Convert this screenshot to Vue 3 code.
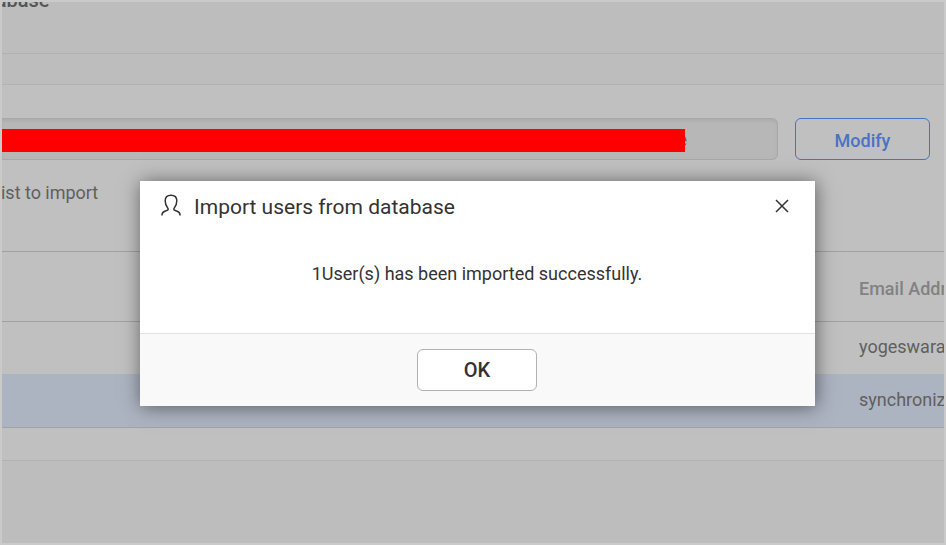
<script setup>
const rows = [
  { email: 'yogeswaran', selected: false },
  { email: 'synchronize', selected: true },
]
</script>

<template>
  <div class="screen">
    <header class="page-header"><h1>database</h1></header>
    <div class="strip"></div>
    <main class="panel">
      <div class="form-row">
        <div class="field"><span class="redacted"></span><span class="tail">e</span></div>
        <button class="modify">Modify</button>
      </div>
      <p class="hint">ist to import</p>
      <div class="table">
        <div class="row head"><span>Email Address</span></div>
        <div v-for="r in rows" :key="r.email" class="row" :class="{ selected: r.selected }">
          <span>{{ r.email }}</span>
        </div>
      </div>
    </main>

    <section class="dialog">
      <div class="dialog-head">
        <svg class="user" width="20" height="23" viewBox="0 0 20 23" fill="none" stroke="#333" stroke-width="1.5">
          <path d="M1 21.6V20.8C1 18.6 2.4 17.7 4.4 17L6.4 16.2C7.4 15.8 7.4 14.7 6.7 13.9C4.8 11.8 4.2 9.5 4.2 6.8C4.2 3 6.1 1.3 10 1.3S15.8 3 15.8 6.8C15.8 9.5 15.2 11.8 13.3 13.9C12.6 14.7 12.6 15.8 13.6 16.2L15.6 17C17.6 17.7 19 18.6 19 20.8V21.6" />
        </svg>
        <h2>Import users from database</h2>
        <svg class="close" width="14" height="14" viewBox="0 0 14 14" stroke="#333" stroke-width="1.5">
          <path d="M1 1L13 13M13 1L1 13" />
        </svg>
      </div>
      <p class="message">1User(s) has been imported successfully.</p>
      <footer><button class="ok">OK</button></footer>
    </section>
  </div>
</template>

<style>
body { margin: 0; overflow: hidden; }
</style>

<style scoped>
* { box-sizing: border-box; }
h1, h2, p { margin: 0; font-weight: 400; }
button { font-family: inherit; padding: 0; }
.screen {
  position: relative;
  width: 946px;
  height: 545px;
  border: 2px solid #cacaca;
  background: #bdbdbd;
  overflow: hidden;
  font-family: Roboto, "Liberation Sans", sans-serif;
  color: #5f5f5f;
}
.page-header {
  height: 52px;
  border-bottom: 1px solid #b2b2b2;
  overflow: hidden;
}
h1 {
  margin: -14px 0 0 -35px;
  font-size: 20px;
  line-height: 24px;
  font-weight: 500;
  color: #555;
}
.strip { height: 31px; border-bottom: 1px solid #b2b2b2; }
.panel {
  height: 376px;
  background: #c0c0c0;
  border-bottom: 1px solid #b1b1b1;
  padding-top: 33px;
}
.form-row { display: flex; gap: 17px; height: 42px; }
.field {
  width: 776px;
  display: flex;
  align-items: center;
  background: #b7b7b7;
  border: 1px solid #a8a8a8;
  border-left: 0;
  border-radius: 0 6px 6px 0;
  box-shadow: inset 0 2px 3px rgba(0, 0, 0, .06);
  font-size: 18px;
  overflow: hidden;
}
.redacted { width: 683px; height: 23px; margin-top: 2px; background: #f00; z-index: 1; }
.tail { margin-left: -7.5px; color: #666; }
.modify {
  width: 135px;
  background: transparent;
  border: 1px solid #4673c4;
  border-radius: 6px;
  color: #4a72c5;
  font-size: 18px;
  font-weight: 500;
  padding-top: 2px;
}
.hint { margin: 22px 0 0 -1px; height: 69px; font-size: 18px; line-height: 22px; letter-spacing: -.02px; }
.table { border-top: 1px solid #a1a1a1; border-bottom: 1px solid #a0a2a6; font-size: 18px; }
.row {
  height: 52px;
  display: flex;
  align-items: center;
  padding: 0 0 3px 857px;
  white-space: nowrap;
}
.row.head {
  height: 70px;
  padding-top: 4px;
  padding-bottom: 0;
  border-bottom: 1px solid #a1a1a1;
  font-weight: 500;
  color: #828282;
}
.row.selected { height: 53px; padding-bottom: 2px; background: #adb4c1; }
.dialog {
  position: absolute;
  left: 138px;
  top: 179px;
  width: 675px;
  height: 225px;
  display: flex;
  flex-direction: column;
  background: #fff;
  box-shadow: 1px 1px 18px rgba(0, 0, 0, .5);
  color: #333;
}
.dialog-head { display: flex; align-items: center; height: 50px; padding: 1px 26.5px 0 21px; }
.user { margin-top: -2px; }
.close { margin-top: -1px; }
h2 { flex: 1; margin-left: 13px; font-size: 21px; }
.message { flex: 1; padding: 32px 1px 0 0; text-align: center; font-size: 18px; line-height: 22px; }
footer {
  height: 73px;
  display: flex;
  align-items: center;
  justify-content: center;
  border-top: 1px solid #e2e2e2;
  background: #f9f9f9;
  padding-right: 1px;
}
.ok {
  width: 120px;
  height: 42px;
  border: 1px solid #b1b1b1;
  border-radius: 6px;
  background: #fff;
  color: #333;
  font-size: 20px;
  font-weight: 500;
}
</style>
